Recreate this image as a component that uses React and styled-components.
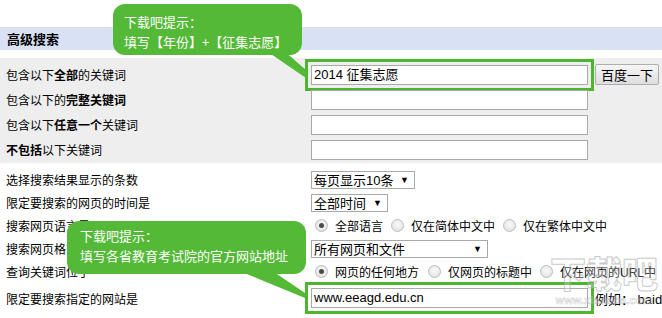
import React from "react";
import styled, { createGlobalStyle } from "styled-components";

const GlobalStyle = createGlobalStyle`
  html, body {
    margin: 0;
    padding: 0;
    background: #ffffff;
    overflow: hidden;
  }
  body {
    font-family: "Liberation Sans", "Noto Sans CJK SC", sans-serif;
    color: #000;
  }
`;

const Page = styled.div`
  position: relative;
  width: 662px;
  height: 318px;
  padding-top: 27px;
  box-sizing: border-box;
  overflow: hidden;
`;

const Header = styled.div`
  height: 23px;
  background: #d9e2f5;
  padding-left: 7px;
  display: flex;
  align-items: center;
  font-size: 13px;
  font-weight: bold;
`;

const Section = styled.div`
  margin-top: ${(p) => p.$gap || 0}px;
  background: ${(p) => p.$bg || "#ffffff"};
  padding: ${(p) => p.$pad};
`;

const Row = styled.div`
  display: grid;
  grid-template-columns: 311px auto;
  align-items: center;
  height: ${(p) => p.$h || 25}px;
`;

const Label = styled.div`
  padding-left: 6px;
  font-size: 12px;
  white-space: nowrap;
  b {
    font-weight: bold;
  }
`;

const Controls = styled.div`
  display: flex;
  align-items: center;
  white-space: nowrap;
  font-size: 12px;
`;

const TextBox = styled.div`
  width: 277px;
  height: 20px;
  box-sizing: border-box;
  border: 1px solid #a9a9a9;
  background: #fff;
  font-size: 13px;
  line-height: 18px;
  padding-left: 2px;
  outline: ${(p) => (p.$mark ? "3px solid #4cb62f" : "none")};
  outline-offset: 3px;
`;

const Button = styled.div`
  margin-left: 7px;
  width: 64px;
  height: 21px;
  box-sizing: border-box;
  border: 1px solid #adadad;
  border-radius: 2px;
  background: linear-gradient(#f6f6f6, #dedede);
  font-size: 13px;
  display: flex;
  align-items: center;
  justify-content: center;
`;

const Select = styled.div`
  width: ${(p) => p.$w}px;
  height: 18px;
  box-sizing: border-box;
  border: 1px solid #a9a9a9;
  background: #fff;
  font-size: 13px;
  display: flex;
  align-items: center;
  padding: 0 5px 0 2px;
  span {
    margin-left: auto;
    font-size: 9px;
  }
`;

const Radio = styled.span`
  width: 13px;
  height: 13px;
  box-sizing: border-box;
  border-radius: 50%;
  border: 1px solid #bcbcbc;
  background: radial-gradient(circle at 50% 40%, #fbfbfb, #dcdcdc);
  margin: 0 7px 0 4px;
  position: relative;
  flex: none;
  &::after {
    content: "";
    display: ${(p) => (p.$on ? "block" : "none")};
    position: absolute;
    left: 3px;
    top: 3px;
    width: 5px;
    height: 5px;
    border-radius: 50%;
    background: #4a4a4a;
  }
`;

const Option = styled.span`
  font-size: 12px;
  margin-right: ${(p) => p.$mr || 4}px;
`;

const Hint = styled.span`
  margin-left: 7px;
  font-size: 13px;
`;

const Bubble = styled.div`
  position: absolute;
  left: ${(p) => p.$x}px;
  top: ${(p) => p.$y}px;
  width: ${(p) => p.$w}px;
  height: ${(p) => p.$h}px;
  box-sizing: border-box;
  padding: ${(p) => p.$pad};
  background: #54b936;
  border-radius: 12px;
  color: #fff;
  font-family: "Noto Sans CJK SC", sans-serif;
  font-size: 13px;
  line-height: 20px;
  z-index: 2;
`;

const Tail = styled.svg`
  position: absolute;
  left: 0;
  top: 0;
  overflow: visible;
  z-index: 2;
  pointer-events: none;
`;

const Watermark = styled.div`
  position: absolute;
  left: 550px;
  top: 250px;
  width: 108px;
  display: flex;
  flex-direction: column;
  align-items: center;
  z-index: 1;
  color: rgba(255, 255, 255, 0.25);
  -webkit-text-stroke: 1px rgba(165, 165, 165, 0.6);
  font-family: "Noto Sans CJK SC", sans-serif;
  font-weight: 900;
  font-size: 36px;
  line-height: 44px;
  small {
    font-family: "Liberation Sans", sans-serif;
    font-size: 11px;
    line-height: 12px;
    font-weight: bold;
    -webkit-text-stroke: 0.5px rgba(165, 165, 165, 0.6);
    color: rgba(255, 255, 255, 0.3);
  }
`;

export default function App() {
  return (
    <>
      <GlobalStyle />
      <Page>
        <Header>高级搜索</Header>
        <Section $gap={8} $bg="#eeeeee" $pad="4px 0 1px">
          <Row>
            <Label>包含以下<b>全部</b>的关键词</Label>
            <Controls>
              <TextBox $mark>2014 征集志愿</TextBox>
              <Button>百度一下</Button>
            </Controls>
          </Row>
          <Row>
            <Label>包含以下的<b>完整关键词</b></Label>
            <Controls>
              <TextBox />
            </Controls>
          </Row>
          <Row>
            <Label>包含以下<b>任意一个</b>关键词</Label>
            <Controls>
              <TextBox />
            </Controls>
          </Row>
          <Row>
            <Label><b>不包括</b>以下关键词</Label>
            <Controls>
              <TextBox />
            </Controls>
          </Row>
        </Section>
        <Section $pad="5px 0 0">
          <Row $h={23}>
            <Label>选择搜索结果显示的条数</Label>
            <Controls>
              <Select $w={104}>每页显示10条<span>▼</span></Select>
            </Controls>
          </Row>
          <Row $h={23}>
            <Label>限定要搜索的网页的时间是</Label>
            <Controls>
              <Select $w={77}>全部时间<span>▼</span></Select>
            </Controls>
          </Row>
          <Row $h={23}>
            <Label>搜索网页语言是</Label>
            <Controls>
              <Radio $on />
              <Option>全部语言</Option>
              <Radio />
              <Option>仅在简体中文中</Option>
              <Radio />
              <Option>仅在繁体中文中</Option>
            </Controls>
          </Row>
          <Row $h={23}>
            <Label>搜索网页格式是</Label>
            <Controls>
              <Select $w={177}>所有网页和文件<span>▼</span></Select>
            </Controls>
          </Row>
          <Row $h={23}>
            <Label>查询关键词位于</Label>
            <Controls>
              <Radio $on />
              <Option $mr={5}>网页的任何地方</Option>
              <Radio />
              <Option $mr={4}>仅网页的标题中</Option>
              <Radio />
              <Option>仅在网页的URL中</Option>
            </Controls>
          </Row>
          <Row $h={30}>
            <Label>限定要搜索指定的网站是</Label>
            <Controls>
              <TextBox $mark>www.eeagd.edu.cn</TextBox>
              <Hint>例如： baidu.com</Hint>
            </Controls>
          </Row>
        </Section>

        <Watermark>
          下载吧
          <small>www.xiazaiba.com</small>
        </Watermark>

        <Tail width="662" height="318">
          <polygon points="265,50 283,50 306,70 306,78" fill="#54b936" />
          <polygon points="232,268 268,268 305,293 305,298" fill="#54b936" />
        </Tail>
        <Bubble $x={113} $y={4} $w={189} $h={51} $pad="8px 0 0 11px">
          下载吧提示：
          <br />
          填写【年份】+【征集志愿】
        </Bubble>
        <Bubble $x={67} $y={221} $w={239} $h={53} $pad="5px 0 0 13px">
          下载吧提示：
          <br />
          填写各省教育考试院的官方网站地址
        </Bubble>
      </Page>
    </>
  );
}
